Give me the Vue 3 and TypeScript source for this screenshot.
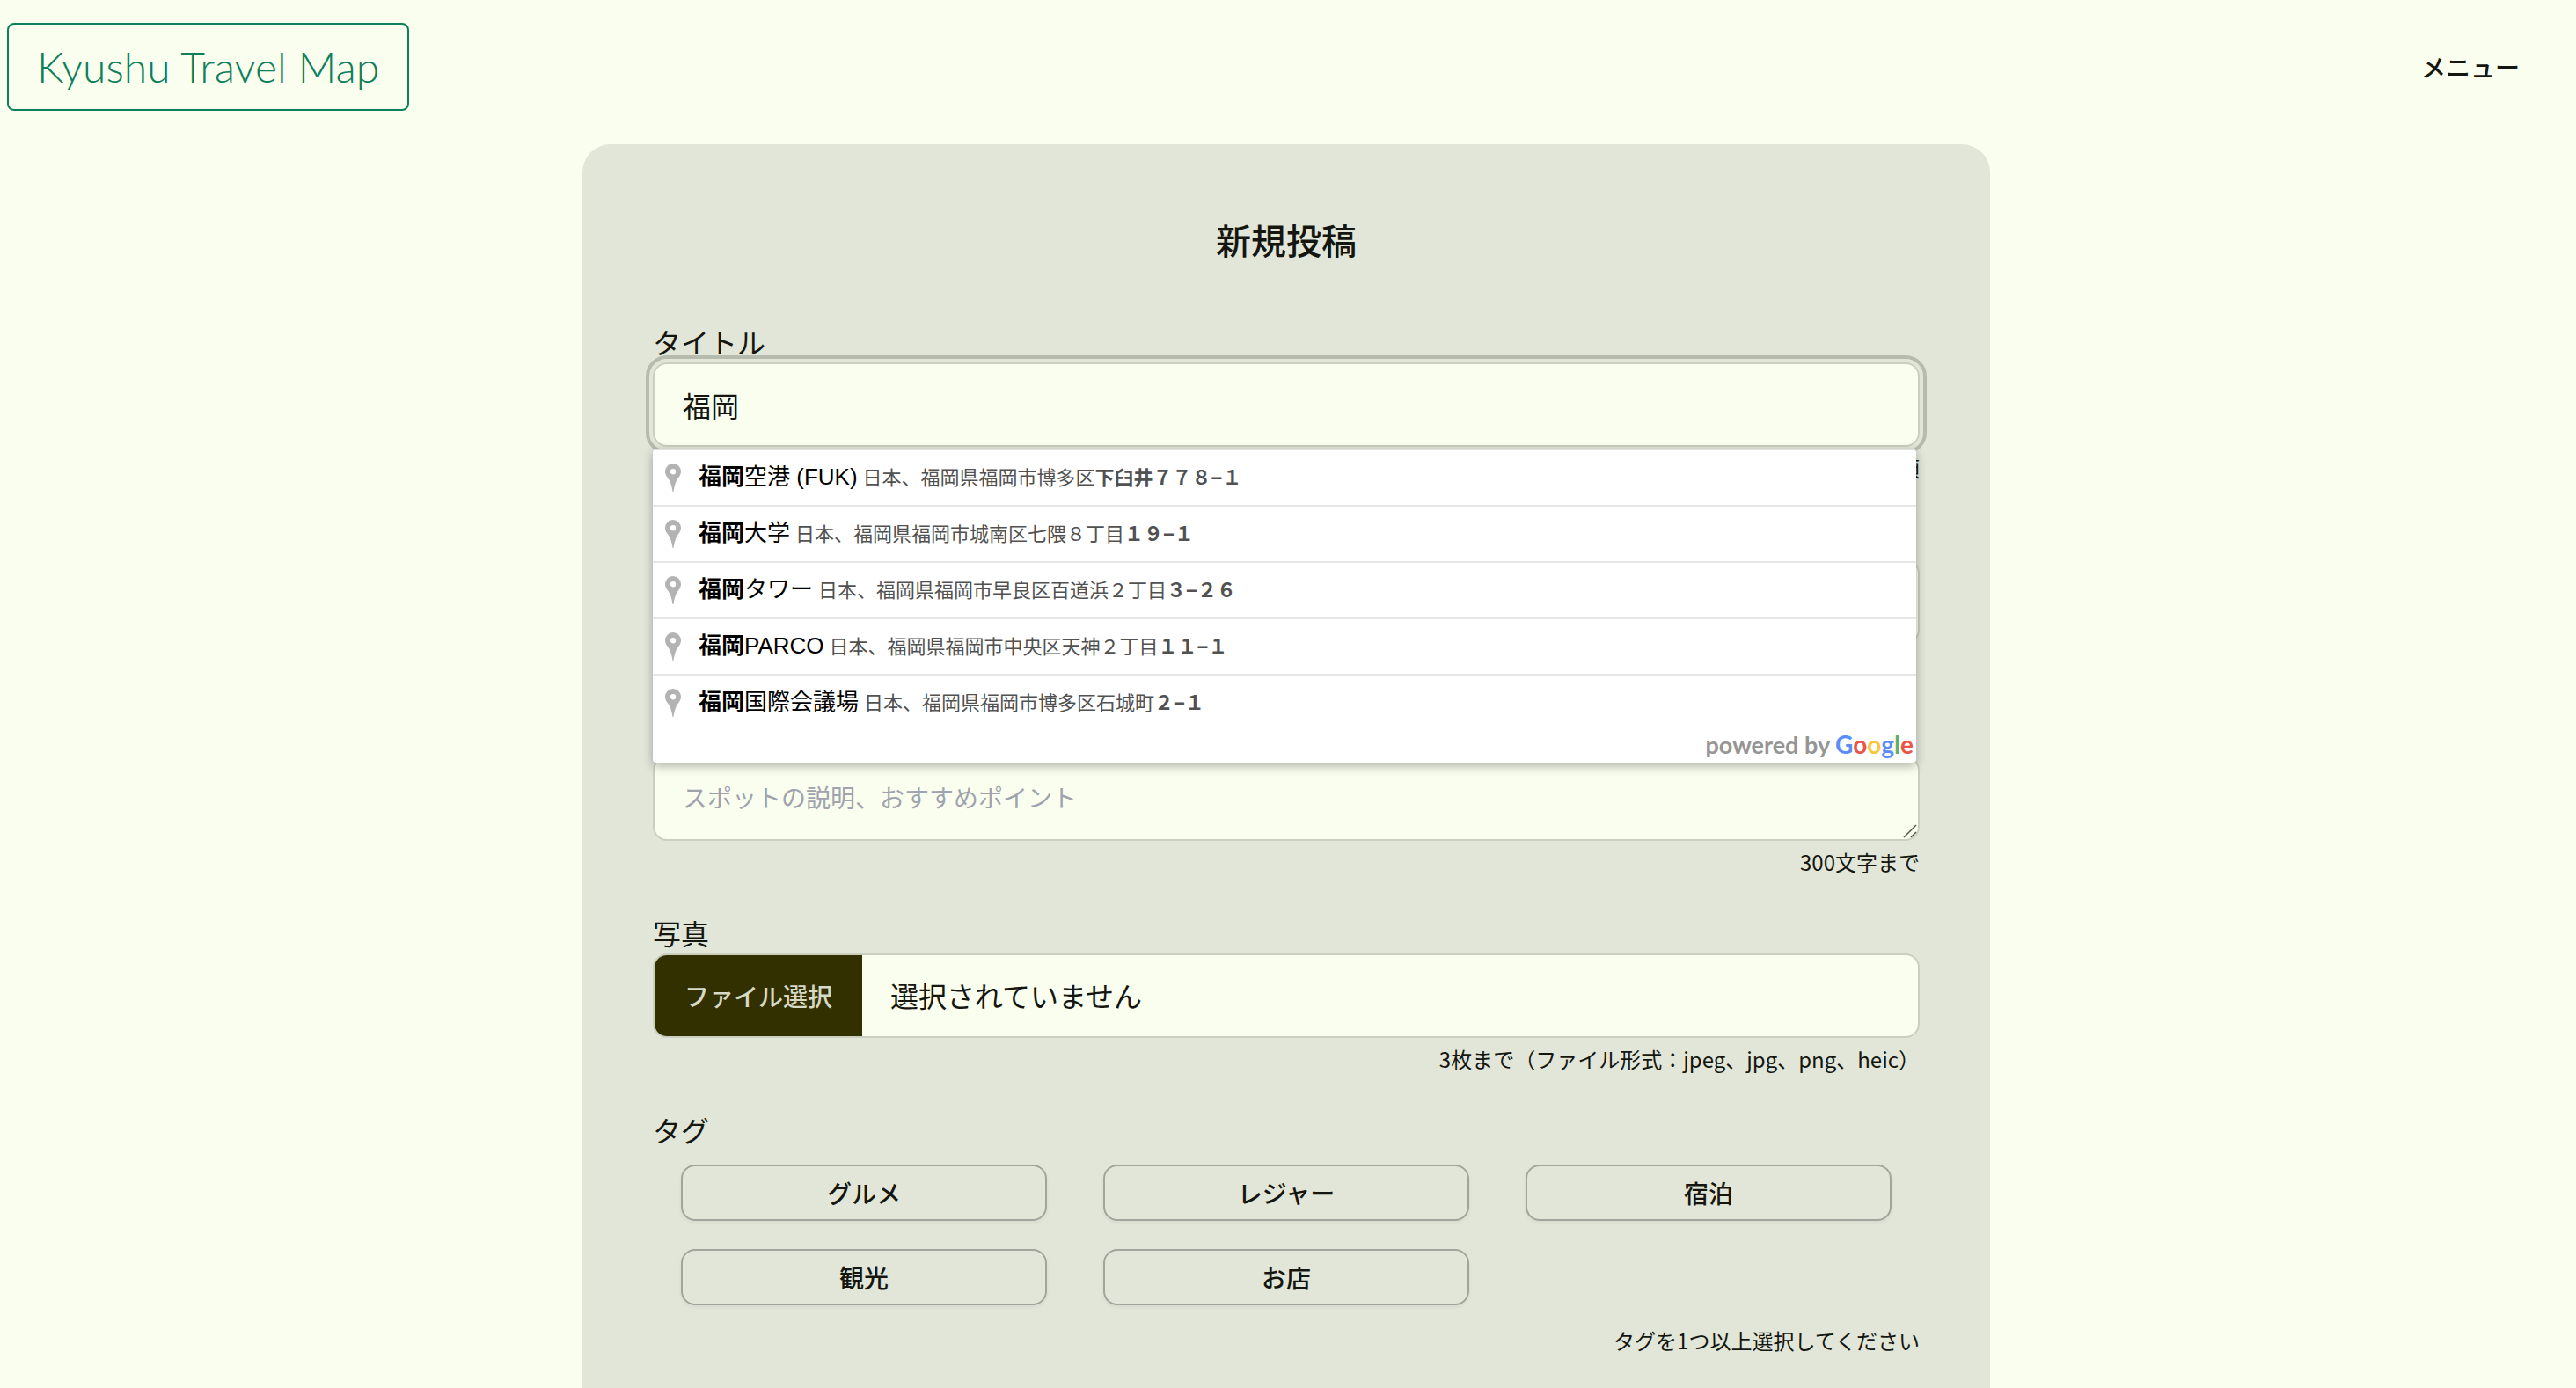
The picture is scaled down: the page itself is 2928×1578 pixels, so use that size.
<script setup lang="ts">
import { ref } from 'vue'

interface Suggestion {
  name: string
  area: string
  block: string
}

const title = ref('福岡')

const suggestions: Suggestion[] = [
  { name: '空港 (FUK)', area: '日本、福岡県福岡市博多区', block: '下臼井７７８−１' },
  { name: '大学', area: '日本、福岡県福岡市城南区七隈８丁目', block: '１９−１' },
  { name: 'タワー', area: '日本、福岡県福岡市早良区百道浜２丁目', block: '３−２６' },
  { name: 'PARCO', area: '日本、福岡県福岡市中央区天神２丁目', block: '１１−１' },
  { name: '国際会議場', area: '日本、福岡県福岡市博多区石城町', block: '２−１' },
]

const googleLetters = [
  { char: 'G', color: '#5a8df5' },
  { char: 'o', color: '#ea5548' },
  { char: 'o', color: '#fac63a' },
  { char: 'g', color: '#5a8df5' },
  { char: 'l', color: '#58b26c' },
  { char: 'e', color: '#ea5548' },
]

const tags = ['グルメ', 'レジャー', '宿泊', '観光', 'お店']
</script>

<template>
  <div class="page">
    <header class="header">
      <a class="logo" href="#">Kyushu Travel Map</a>
      <button class="menu" type="button">メニュー</button>
    </header>

    <main class="card">
      <h1 class="heading">新規投稿</h1>

      <form class="form" @submit.prevent>
        <div class="field">
          <label class="label" for="title">タイトル</label>
          <div class="anchor">
            <input id="title" v-model="title" class="control focused" type="text" autocomplete="off" />
            <div class="suggestions">
              <ul class="list">
                <li v-for="item in suggestions" :key="item.name" class="item">
                  <svg class="pin" viewBox="0 0 18 32" aria-hidden="true">
                    <path
                      fill="#b3b3b3"
                      fill-rule="evenodd"
                      d="M9 0a9 9 0 0 0-9 9c0 5 3.500 7 5.500 11.500C7 24 8 28 8.500 32h1C10 28 11 24 12.500 20.500 14.500 16 18 14 18 9a9 9 0 0 0-9-9zm0 6a3.200 3.200 0 1 1 0 6.400A3.200 3.200 0 0 1 9 6z"
                    />
                  </svg>
                  <span class="name"><b>福岡</b>{{ item.name }}</span>
                  <span class="address">{{ item.area }}<b>{{ item.block }}</b></span>
                </li>
              </ul>
              <p class="credit">
                powered by
                <span class="google"><span v-for="(l, i) in googleLetters" :key="i" :style="{ color: l.color }">{{ l.char }}</span></span>
              </p>
            </div>
          </div>
          <p class="hint">必須</p>
        </div>

        <div class="field">
          <div class="label"></div>
          <input class="control" type="text" aria-label="住所" />
          <p class="hint"></p>
        </div>

        <div class="field">
          <div class="label"></div>
          <div class="anchor">
            <textarea
              class="control area"
              rows="1"
              aria-label="説明"
              placeholder="スポットの説明、おすすめポイント"
            ></textarea>
            <svg class="grip" viewBox="0 0 16 16" aria-hidden="true">
              <path d="M1 15 15 1M9 15l6-6" fill="none" stroke="#55584c" stroke-width="1.500" />
            </svg>
          </div>
          <p class="hint">300文字まで</p>
        </div>

        <div class="field">
          <label class="label" for="photos">写真</label>
          <label class="control file">
            <input id="photos" class="file-input" type="file" multiple accept=".jpeg,.jpg,.png,.heic" />
            <span class="file-button">ファイル選択</span>
            <span class="file-name">選択されていません</span>
          </label>
          <p class="hint">3枚まで（ファイル形式：jpeg、jpg、png、heic）</p>
        </div>

        <div class="field">
          <div id="tag-label" class="label">タグ</div>
          <div class="tags" role="group" aria-labelledby="tag-label">
            <button v-for="tag in tags" :key="tag" class="tag" type="button">{{ tag }}</button>
          </div>
          <p class="hint">タグを1つ以上選択してください</p>
        </div>
      </form>
    </main>
  </div>
</template>

<style>
body {
  margin: 0;
  background: #f9feef;
}
</style>

<style scoped>
.page {
  box-sizing: border-box;
  display: flex;
  flex-direction: column;
  min-height: 100vh;
  padding-right: 4px;
  background: #f9feef;
  color: #14160f;
  font-family: "Noto Sans CJK JP", sans-serif;
}

.header {
  display: flex;
  align-items: center;
  justify-content: space-between;
  padding: 26px 60px 26px 8px;
  margin-bottom: 12px;
}

.logo {
  padding: 0 32px;
  border: 2px solid #0d7f5b;
  border-radius: 8px;
  color: #0d7f5b;
  font-family: Lato, sans-serif;
  font-size: 48px;
  font-weight: 300;
  line-height: 96px;
  text-decoration: none;
}

.menu {
  padding: 0;
  border: 0;
  background: none;
  color: inherit;
  font-family: inherit;
  font-size: 28px;
  font-weight: 500;
  line-height: 40px;
}

.card {
  box-sizing: border-box;
  flex: 1;
  width: 100%;
  max-width: 1600px;
  margin: 0 auto;
  padding: 80px 80px 0;
  border-radius: 32px 32px 0 0;
  background: #e2e6d9;
}

.heading {
  margin: 0 0 68px;
  font-size: 40px;
  font-weight: 500;
  line-height: 56px;
  text-align: center;
}

.form {
  display: flex;
  flex-direction: column;
  gap: 40px;
}

.label {
  display: block;
  height: 44px;
  font-size: 32px;
  line-height: 40px;
}

.anchor {
  position: relative;
}

.control {
  box-sizing: border-box;
  display: block;
  width: 100%;
  height: 96px;
  padding: 0 32px;
  border: 2px solid #cbcfc0;
  border-radius: 16px;
  background: #f9feef;
  color: inherit;
  font-family: inherit;
  font-size: 32px;
}

.focused {
  outline: 4px solid #b7bbad;
  outline-offset: 4px;
}

.area {
  padding-top: 24px;
  font-size: 28px;
  line-height: 40px;
  resize: none;
  overflow: hidden;
}

.area::placeholder {
  color: #9fa3ad;
}

.grip {
  position: absolute;
  right: 3px;
  bottom: 3px;
  width: 16px;
  height: 16px;
}

.hint {
  height: 36px;
  margin: 8px 0 0;
  font-size: 24px;
  line-height: 32px;
  text-align: right;
}

.suggestions {
  position: absolute;
  z-index: 1;
  top: calc(100% + 2px);
  left: 0;
  right: 4px;
  border-top: 2px solid #dfe0e3;
  border-radius: 4px;
  background: #fff;
  box-shadow: 0 4px 12px rgba(0, 0, 0, 0.3);
  font-family: "Liberation Sans", "Noto Sans CJK JP", sans-serif;
}

.list {
  margin: 0;
  padding: 0;
  list-style: none;
}

.item {
  display: flex;
  align-items: baseline;
  gap: 6px;
  height: 62px;
  padding: 0 14px;
  border-bottom: 2px solid #e6e6e6;
  line-height: 60px;
  white-space: nowrap;
}

.item:last-child {
  border-bottom: 0;
}

.pin {
  align-self: center;
  width: 18px;
  height: 32px;
  margin-right: 14px;
}

.name {
  color: #000;
  font-size: 26px;
}

.address {
  color: #515151;
  font-size: 22px;
}

.credit {
  margin: 0;
  padding: 0 3px 4px 0;
  color: #959595;
  font-family: Lato, sans-serif;
  font-size: 27px;
  font-weight: 700;
  line-height: 32px;
  text-align: right;
}

.google {
  font-size: 28px;
}

.file {
  display: flex;
  align-items: stretch;
  padding: 0;
  overflow: hidden;
  position: relative;
}

.file-input {
  position: absolute;
  inset: 0;
  opacity: 0;
}

.file-button {
  padding: 0 34px;
  background: #333000;
  color: #d6dac6;
  font-size: 28px;
  font-weight: 500;
  line-height: 92px;
}

.file-name {
  padding: 0 32px;
  line-height: 90px;
}

.tags {
  display: grid;
  grid-template-columns: repeat(3, 1fr);
  gap: 32px 64px;
  padding: 16px 32px;
}

.tag {
  height: 64px;
  padding: 0;
  border: 2px solid #a1a59b;
  border-radius: 16px;
  background: none;
  box-shadow: 0 2px 4px rgba(0, 0, 0, 0.05);
  color: inherit;
  font-family: inherit;
  font-size: 28px;
  font-weight: 500;
}
</style>
